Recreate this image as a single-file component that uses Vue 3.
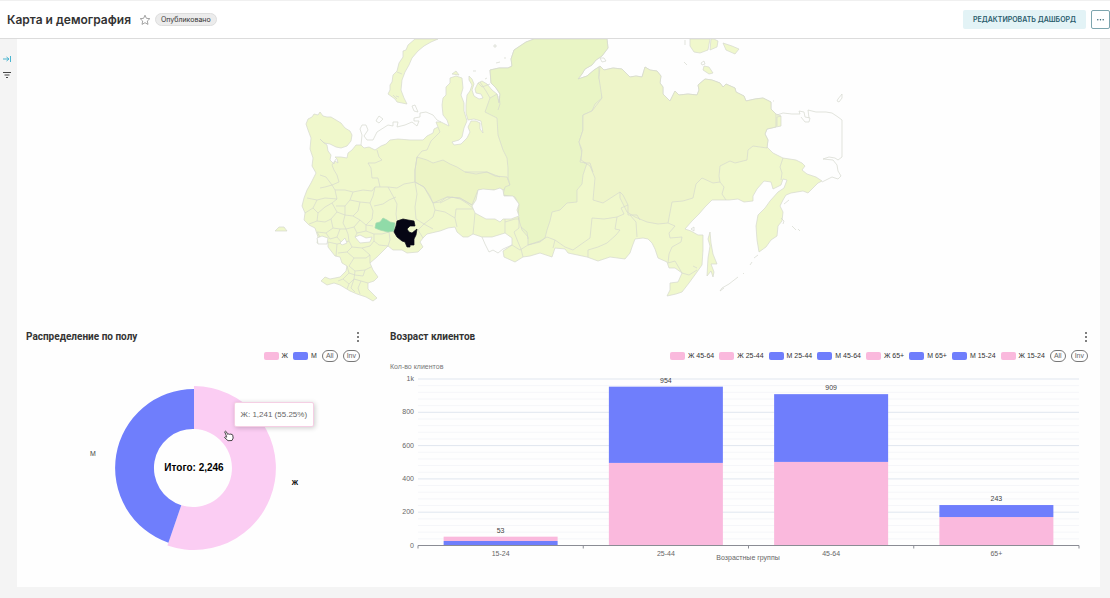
<script setup>
const pink = '#fab9dd'
const blue = '#6f7efc'

const pieLegend = [
  { name: 'Ж', color: pink },
  { name: 'М', color: blue },
]
const ageLegend = [
  { name: 'Ж 45-64', color: pink },
  { name: 'Ж 25-44', color: pink },
  { name: 'М 25-44', color: blue },
  { name: 'М 45-64', color: blue },
  { name: 'Ж 65+', color: pink },
  { name: 'М 65+', color: blue },
  { name: 'М 15-24', color: blue },
  { name: 'Ж 15-24', color: pink },
]

const axis = { left: 46, right: 707, base: 184.5, top: 18, max: 1000 }
const yOf = (v) => axis.base - (v / axis.max) * (axis.base - axis.top)
const step = (axis.right - axis.left) / 4
const ticks = [0, 200, 400, 600, 800, 1000]
const minor = Array.from({ length: 25 }, (_, i) => (i + 1) * 40).filter((v) => v % 200)
const groups = [
  { name: '15-24', total: 53, lower: 27, colors: [blue, pink] },
  { name: '25-44', total: 954, lower: 496, colors: [pink, blue] },
  { name: '45-64', total: 909, lower: 502, colors: [pink, blue] },
  { name: '65+', total: 243, lower: 171, colors: [pink, blue] },
].map((g, i) => ({ ...g, x: axis.left + step * (i + 0.5) }))

const mainland =
  'M306 124L308 119 312 117 314 114 318 115 320 112 323 116 327 117 331 117 336 120 341 123 345 128 350 131 352 135 351 141 347 146 341 148 336 147 330 144 324 143 320 139 323 142 327 145 328 151 331 155 330 160 334 164 335 161 338 163 337 159 335 157 341 157 347 158 348 153 352 150 356 145 361 145 364 148 369 147 375 150 381 146 386 144 390 140 398 139 410 140 423 140 427 136 433 133 434 129 438 127 436 122 441 122 449 126 447 120 443 115 442 105 443 98 446 95 446 87 450 83 450 78 456 76 462 78 463 88 461 95 464 103 464 111 467 121 464 128 462 137 459 140 452 142 454 145 461 144 467 138 470 132 468 127 471 121 476 121 480 123 480 129 483 133 481 121 474 119 468 120 466 113 466 105 467 95 470 91 472 85 469 80 469 76 472 79 474 84 472 90 474 96 479 99 483 98 481 94 476 93 475 89 478 83 482 81 487 84 492 90 497 94 499 103 500 94 496 88 491 83 490 70 499 68 508 68 512 66 511 59 514 50 520 46 526 42 534 39 607 39 608 48 602 56 596 60 592 65 585 69 582 74 578 79 587 76 594 70 600 66 604 70 613 68 622 69 627 74 630 77 636 76 642 77 645 67 650 70 657 71 661 76 660 83 663 87 663 94 670 101 673 95 675 91 679 95 688 94 697 95 699 90 698 85 705 79 712 80 720 83 723 87 726 84 735 88 736 92 744 96 746 101 755 99 763 98 771 102 771 109 776 114 781 116 781 126 776 127 767 129 765 134 768 140 767 147 773 153 783 158 796 160 802 163 805 166 802 170 807 174 816 177 822 181 818 183 812 189 808 193 803 191 797 192 791 193 786 195 783 200 780 206 783 212 782 221 778 226 777 236 771 240 766 247 759 252 757 240 756 226 758 215 765 208 770 201 778 192 784 188 787 180 783 179 781 185 773 189 771 182 764 181 757 189 753 196 753 201 744 202 738 199 729 200 712 200 705 207 699 214 692 221 685 229 691 231 698 235 703 235 703 250 702 265 697 272 689 283 682 292 676 294 667 296 670 290 670 283 678 282 682 273 675 268 669 268 667 262 658 258 655 249 652 243 648 239 643 238 635 239 632 247 630 253 625 259 610 257 598 261 587 257 568 253 565 249 555 248 552 257 540 253 530 256 523 257 515 262 504 257 503 251 512 245 512 238 505 233 492 237 482 237 473 234 468 237 463 237 457 232 455 227 448 228 440 231 427 234 423 238 420 242 423 247 418 252 407 253 402 250 393 250 388 246 377 257 370 263 373 270 378 277 374 281 368 283 368 289 372 293 377 298 373 301 366 297 357 294 350 291 340 285 334 283 327 285 321 281 325 277 330 279 340 277 346 271 347 266 342 263 340 257 335 256 328 247 328 242 317 243 318 237 315 228 309 225 304 220 305 213 302 206 304 198 307 190 311 183 316 173 312 166 313 158 310 149 311 138 308 130Z'

const krasnoyarsk =
  'M534 39L607 39 608 48 602 56 596 60 592 65 585 69 582 74 578 79 587 76 594 70 599 67 599 78 602 90 602 98 595 104 592 111 583 115 583 130 579 142 582 153 580 162 587 163 583 175 582 184 577 190 577 202 567 203 560 210 552 212 550 221 547 230 545 238 540 242 528 245 528 237 522 230 518 217 519 205 515 197 503 195 505 187 510 185 508 178 508 168 507 158 503 150 498 135 497 118 485 112 490 98 497 94 499 103 500 94 496 88 491 83 490 70 499 68 508 68 512 66 511 59 514 50 520 46 526 42Z'

const yakutia =
  'M583 115L592 111 602 98 599 78 600 66 604 70 613 68 622 69 627 74 630 77 636 76 642 77 645 67 650 70 657 71 661 76 660 83 663 87 663 94 670 101 673 95 675 91 679 95 688 94 697 95 699 90 698 85 705 79 712 80 720 83 723 87 726 84 735 88 736 92 744 96 746 101 755 99 763 98 771 102 771 109 776 114 776 127 767 129 765 134 768 140 767 148 753 146 748 150 747 160 735 163 730 161 720 166 719 176 720 182 713 183 702 178 696 184 693 198 683 201 672 202 668 223 658 224 647 222 635 217 627 212 620 198 620 192 603 203 593 200 595 178 590 166 581 160 582 150 579 142 583 130Z'

const westSiberia =
  'M417 157L427 160 433 163 443 160 450 164 457 167 465 172 476 174 487 172 495 176 507 177 510 185 503 190 500 190 478 190 472 205 460 198 447 197 433 203 424 187 415 182 415 170Z'

const borders = [
  'M320 188L325 187 332 185 335 190 345 190 353 192 363 190 372 191 375 187 388 187 397 188 404 184 415 182 424 187 430 196 433 203 440 202 447 197 460 198 472 205',
  'M332 185L339 182 337 175 334 170 332 165 336 159M320 175L326 177 332 185',
  'M377 150L379 157 382 160 375 163 368 163 371 168 372 178 378 178 380 187',
  'M417 157L422 151 427 150 431 141 440 132 438 127M417 157L415 170 415 182 417 194 415 207 416 219',
  'M375 187L373 196 370 203 373 211 372 219 366 225',
  'M388 187L393 196 397 204 396 214 397 221M396 197L389 200 383 204 374 206',
  'M335 190L337 199 332 203 337 212 345 215 353 216 360 220 366 225',
  'M307 198L317 200 325 198 337 199M317 200L313 208 318 213 325 207 332 203M318 213L317 221 309 224',
  'M305 213L313 208M317 221L325 222 331 219 337 212M331 219L333 228 326 233 317 232',
  'M345 215L343 223 346 229 354 227 360 220M333 228L340 229 346 229M340 229L337 237 330 239 326 233',
  'M353 192L350 200 345 206 345 215M350 200L360 202 370 203M345 206L336 206M360 202L358 211 353 216',
  'M354 227L357 233 366 231 366 225 373 226M357 233L355 237M337 237L342 243 349 241 348 234 346 229',
  'M366 231L374 234 382 234 389 232M374 234L374 241 379 245 388 246M389 232L390 240 388 246',
  'M349 241L352 247 362 248 370 246 374 241M352 247L347 252 338 253M362 248L370 255 370 263',
  'M347 252L354 258 366 258 370 255M354 258L349 266 355 271 365 270 371 267',
  'M347 266L349 273 343 279 349 284 354 279 361 281 368 283M355 271L354 279M349 284L347 289M361 281L358 288 360 294M349 273L355 275 363 276 365 270M343 279L338 281M354 279L351 288 355 292',
  'M317 232L321 239 328 242M328 242L337 244 342 243M337 244L336 256',
  'M423 238L418 230 424 224 433 229M416 219L424 224M424 224L433 217 435 210 433 203M435 210L445 212 455 218 457 227',
  'M440 203L452 197 460 199 468 204 475 210M455 218L456 209 465 209 473 209M475 213L474 224 473 234',
  'M505 219L505 233M519 217L519 228 514 232 518 242 521 249 523 257M512 245L520 250 528 245M521 227L527 232 528 239',
  'M505 222L515 219 519 219',
  'M528 245L540 241 547 237 555 240 565 247 573 250 580 245 590 238 592 218 604 219 617 217 615 229 620 230 616 235 607 243 598 247 588 250 588 257',
  'M555 240L553 248M617 217L624 214 621 208 628 205 628 215',
  'M628 205L623 195 620 192M628 215L637 215 640 220M630 215L636 222 637 237',
  'M668 223L675 226 669 233 670 238 682 237 681 242 672 247 669 254 668 263 675 261 682 273 689 275 697 270M693 266L697 268',
  'M720 182L724 187 722 194 726 200M783 158L780 167 782 173 781 180',
  'M584 163L590 163 593 172M465 172L487 172 500 177',
  'M499 96L500 104 498 110M478 83L482 87 490 84M480 82L486 91 490 98',
]

const islands =
  'M415 39L408 45 406 50 403 51 403 57 399 63 397 71 393 75 392 82 390 85 390 90 388 94 395 99 397 102 407 104 404 98 401 90 402 80 405 72 409 65 412 58 418 51 424 46 431 42 438 39Z M690 39L690 46 694 52 700 53 708 50 710 39Z M711 39L710 50 717 47 718 41 714 39Z M723 43L726 50 735 54 739 49 732 46Z M704 66L703 70 709 74 713 73 709 67Z M275 231L279 227 284 227 287 231Z M452 74L456 71 459 75Z M710 232L708 239 710 246 708 258 707 276 711 271 713 277 714 272 711 264 717 264 713 254 711 243Z'
</script>

<template>
  <div class="page">
    <header class="topbar">
      <h1>Карта и демография</h1>
      <button class="star" aria-label="В избранное">
        <svg viewBox="0 0 12 12"><path d="M6 1.2l1.4 3.1 3.4.4-2.5 2.3.7 3.4L6 8.7 3 10.4l.7-3.4L1.2 4.7l3.4-.4z" /></svg>
      </button>
      <span class="status">Опубликовано</span>
      <button class="edit">РЕДАКТИРОВАТЬ ДАШБОРД</button>
      <button class="more" aria-label="Ещё">
        <svg viewBox="0 0 10 4"><circle cx="2" cy="2" r=".8" /><circle cx="5" cy="2" r=".8" /><circle cx="8" cy="2" r=".8" /></svg>
      </button>
    </header>

    <div class="body">
      <nav class="rail">
        <button aria-label="Развернуть">
          <svg class="expand" viewBox="0 0 10 10"><path d="M1 5h6M4.500 3L7 5 4.500 7M8.500 2v6" /></svg>
        </button>
        <button aria-label="Фильтры">
          <svg class="filter" viewBox="0 0 10 10"><path d="M1 2.500h8M2.500 5h5M4 7.500h2" /></svg>
        </button>
      </nav>

      <main class="board">
        <svg class="map" viewBox="17 39 1083 283" role="img" aria-label="Карта">
          <path class="land" :d="mainland" />
          <path class="west" :d="westSiberia" />
          <path class="kras" :d="krasnoyarsk" />
          <path class="yak" :d="yakutia" />
          <path class="land" :d="islands" />
          <path v-for="b in borders" :key="b" class="line" :d="b" />
          <path class="empty" d="M478 190L483 189 494 190 500 188 503 190 504 196 513 196 519 204 517 210 519 216 511 219 503 219 500 222 495 219 486 219 475 213 472 206 476 200Z" />
          <path class="empty" d="M355 237L360 235 366 238 372 237 370 242 360 243Z M317 238L322 236 328 238 327 244 318 244Z M340 243L345 238 347 243 342 245Z" />
          <path class="line" d="M482 237L485 244 489 252 493 250 498 253 503 249 512 245M396 96L399 97M456 71M393 95L397 99" />
          <path class="line" d="M397 72L402 74" />
          <path class="line" d="M361 145L362 135 360 129 362 125 366 125 368 130 364 136 367 140 373 140 377 132 388 125 393 126 393 122 398 122 397 127 405 125 412 122 417 126 419 121 414 121 414 118 420 117 420 113 426 112 433 115 437 120 441 122" />
          <path class="line" d="M377 119L379 116 383 119 379 123 376 121Z M412 106L415 105 418 112 414 111Z M494 45h2v2h-2z M496 63l4-1 M504 58l2 0 M485 79l2-1 M473 71l3 0M600 58L604 58 606 61 602 62ZM685 40v5M684 62l3 3M701 63l3-2 1 3-3 1zM773 101h1" />
          <path class="line" d="M777 115L783 113 792 114 800 114 799 111 804 112 805 117 810 118 809 122 805 122 801 117M809 118L808 110 816 112 826 112 832 113 838 117 842 120 842 157 838 160 835 158 829 157 823 159 833 160 837 165 838 171 841 176 838 179 832 177 822 182M838 99L842 94 842 98 839 102 837 101Z M781 116L777 117 777 126" />
          <path class="line" d="M758 255L754 258 M752 262l-2 3 M744 273l-1 1 M738 277L729 284 722 288 720 291 724 288M784 204l5-4M781 218l3 3-1 3M792 226l4 4M798 229l2 2M691 229l3-2 0 4z" />
          <path class="green" d="M375 228L376 223 380 222 383 218 387 220 390 222 395 223 394 231 388 232 380 230Z" />
          <path class="black" d="M397 221L403 219 408 220 414 221 415 226 410 226 407 229 409 232 412 233 417 229 416 235 414 239 414 245 410 245 410 247 407 247 405 242 402 241 397 237 394 232 396 226Z" />
        </svg>

        <div class="charts">
          <section class="card pie">
            <div class="head">
              <h2>Распределение по полу</h2>
              <button class="kebab" aria-label="Меню"><i></i><i></i><i></i></button>
            </div>
            <div class="legend">
              <button v-for="l in pieLegend" :key="l.name" class="item">
                <span class="swatch" :style="{ background: l.color }"></span>{{ l.name }}
              </button>
              <button class="chip">All</button><button class="chip">Inv</button>
            </div>
            <div class="plot">
              <svg viewBox="0 0 355 226">
                <path fill="#fbcdf3" d="M177 25A82 82 0 1 1 150.400 184.600L164.300 144.200A39 39 0 1 0 177 68Z" />
                <path :fill="blue" d="M177 28A79 79 0 0 0 151.400 181.700L164.300 144.200A39 39 0 0 1 177 68Z" />
                <text class="total" x="177" y="110">Итого: 2,246</text>
                <text class="name" x="76" y="95">М</text>
                <text class="name strong" x="278" y="124">Ж</text>
              </svg>
              <div class="tooltip">Ж: 1,241 (55.25%)</div>
              <svg class="cursor" viewBox="0 0 12 12"><path d="M3.600 6.500L1.700 1.800Q2.400.6 3.300 1.700L4.700 4.400Q5.500 3.500 6.300 4.300 7.200 3.600 8 4.400 9.300 3.900 9.700 5.100L10.200 8 9 10.500 5 10.700 1.500 7.500Q1.700 6.200 3.600 7.200Z" /></svg>
            </div>
          </section>

          <section class="card age">
            <div class="head">
              <h2>Возраст клиентов</h2>
              <button class="kebab" aria-label="Меню"><i></i><i></i><i></i></button>
            </div>
            <div class="legend">
              <button v-for="l in ageLegend" :key="l.name" class="item">
                <span class="swatch" :style="{ background: l.color }"></span>{{ l.name }}
              </button>
              <button class="chip">All</button><button class="chip">Inv</button>
            </div>
            <div class="plot">
              <svg viewBox="0 0 728 226">
                <path v-for="v in minor" :key="'m' + v" class="minor" :d="`M${axis.left} ${yOf(v)}H${axis.right}`" />
                <path v-for="v in ticks" :key="v" class="major" :d="`M${axis.left} ${yOf(v)}H${axis.right}`" />
                <text v-for="v in ticks" :key="'t' + v" class="tick" x="42" :y="yOf(v) + 2">{{ v === 1000 ? '1k' : v }}</text>
                <text class="axis-name" x="18" y="8">Кол-во клиентов</text>
                <g v-for="g in groups" :key="g.name">
                  <rect :x="g.x - 57" :y="yOf(g.lower)" width="114" :height="axis.base - yOf(g.lower)" :fill="g.colors[0]" />
                  <rect :x="g.x - 57" :y="yOf(g.total)" width="114" :height="yOf(g.lower) - yOf(g.total)" :fill="g.colors[1]" />
                  <text class="value" :x="g.x" :y="yOf(g.total) - 4">{{ g.total }}</text>
                  <text class="group" :x="g.x" y="195">{{ g.name }}</text>
                </g>
                <path class="base" :d="`M${axis.left} ${axis.base}H${axis.right}`" />
                <path v-for="i in 5" :key="'b' + i" class="base" :d="`M${axis.left + step * (i - 1)} ${axis.base}v3`" />
                <text class="group" x="376" y="199">Возрастные группы</text>
              </svg>
            </div>
          </section>
        </div>
      </main>
    </div>
  </div>
</template>

<style>
body {
  background: #f4f4f4;
}
</style>

<style scoped>
.page {
  font-family: Inter, "Liberation Sans", sans-serif;
  color: #333;
  font-size: 7px;
}
button {
  border: 0;
  padding: 0;
  background: none;
  font: inherit;
  color: inherit;
  cursor: pointer;
}
svg {
  display: block;
}
.topbar {
  display: flex;
  align-items: center;
  box-sizing: border-box;
  height: 39px;
  padding-left: 7px;
  background: #fff;
  border-top: 1px solid #f0f0f0;
  border-bottom: 1px solid #dcdcdc;
}
h1 {
  margin: 0;
  font-size: 12px;
  line-height: 16px;
  font-weight: 600;
}
.star {
  width: 12px;
  margin: 0 4px 0 8px;
}
.star path {
  fill: none;
  stroke: #999;
  stroke-width: 0.9;
}
.status {
  padding: 0 5px;
  line-height: 11px;
  border: 1px solid #dedede;
  border-radius: 7px;
  background: #ececec;
}
.edit {
  margin-left: auto;
  padding: 0 10px;
  height: 19px;
  border-radius: 2px;
  background: #e3f3f6;
  color: #2a5c6c;
  font-weight: 600;
}
.more {
  box-sizing: border-box;
  width: 19px;
  height: 19px;
  margin-left: 5px;
  padding: 0 4px;
  border: 1px solid #7da5ae;
  border-radius: 2px;
}
.more svg {
  fill: #2a5c6c;
}
.body {
  display: flex;
  padding: 0 10px 11px 0;
}
.rail {
  display: flex;
  flex-direction: column;
  gap: 6px;
  width: 17px;
  padding: 15px 0 0 2px;
  box-sizing: border-box;
}
.rail button {
  width: 10px;
}
.expand {
  fill: none;
  stroke: #4ab5d0;
}
.filter {
  fill: none;
  stroke: #444;
  stroke-width: 1.2;
}
.board {
  flex: 1;
  min-width: 0;
  background: #fefefe;
}
.map {
  width: 100%;
}
.map path {
  stroke: #d6d9ce;
  stroke-width: 0.7;
  stroke-linejoin: round;
}
.map .land {
  fill: #f0f8cc;
}
.map .west {
  fill: #ecf4c5;
}
.map .kras {
  fill: #e9f5c5;
}
.map .yak {
  fill: #eef5c9;
}
.map .line {
  fill: none;
}
.map .empty {
  fill: #fefefe;
}
.map .green {
  fill: #90dba8;
  stroke: #a5d8b0;
}
.map .black {
  fill: #060614;
  stroke: #060614;
}
.charts {
  display: grid;
  grid-template-columns: 355fr 728fr;
}
.head {
  display: flex;
  justify-content: space-between;
  align-items: center;
  height: 26px;
  padding: 2px 12px 0 9px;
}
.age .head {
  padding-left: 18px;
}
h2 {
  margin: 0;
  font-family: Roboto, sans-serif;
  font-size: 10px;
  line-height: 14px;
  font-weight: 700;
}
.kebab {
  display: flex;
  flex-direction: column;
  gap: 2px;
  padding: 0 1px;
}
.kebab i {
  width: 2px;
  height: 2px;
  border-radius: 1px;
  background: #555;
}
.legend {
  display: flex;
  justify-content: flex-end;
  align-items: center;
  gap: 5px;
  height: 11px;
  padding-right: 12px;
}
.legend,
.plot {
  font-family: "Liberation Sans", Arial, sans-serif;
}
.item {
  display: flex;
  align-items: center;
  gap: 3px;
  line-height: 10px;
}
.swatch {
  width: 15px;
  height: 8px;
  border-radius: 2px;
}
.chip {
  border: 1px solid #777;
  border-radius: 6px;
  padding: 0 3px;
  line-height: 10px;
  color: #666;
}
.plot {
  position: relative;
}
.plot > svg:first-child {
  width: 100%;
}
text {
  fill: #444;
  text-anchor: middle;
}
.total {
  font-size: 10px;
  font-weight: 700;
  fill: #000;
}
.strong {
  font-weight: 700;
  fill: #000;
}
.tick {
  text-anchor: end;
  fill: #666;
}
.axis-name {
  text-anchor: start;
  fill: #777;
}
.group {
  fill: #666;
}
.minor {
  stroke: #f5f6f9;
}
.major {
  stroke: #e0e6ef;
}
.base {
  stroke: #8a8c94;
}
.tooltip {
  position: absolute;
  left: 61%;
  top: 41px;
  padding: 0 6px;
  line-height: 23px;
  font-size: 8px;
  color: #666;
  background: #fff;
  border: 1px solid #f5cfe4;
  border-radius: 2px;
  box-shadow: 1px 1px 5px rgba(0, 0, 0, 0.2);
}
.cursor {
  position: absolute;
  left: 58%;
  top: 69px;
  width: 12px;
}
.cursor path {
  fill: #fff;
  stroke: #333;
  stroke-width: 0.9;
}
</style>
